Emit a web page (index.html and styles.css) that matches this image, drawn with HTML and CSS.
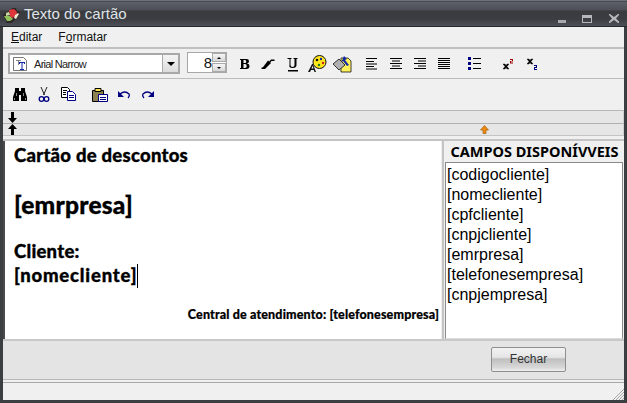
FILE: index.html
```html
<!DOCTYPE html>
<html lang="pt">
<head>
<meta charset="utf-8">
<title>Texto do cartão</title>
<link rel="stylesheet" href="styles.css">
</head>
<body>
<div class="window">
  <header class="titlebar">
    <svg class="app-icon" width="17" height="16" viewBox="0 0 17 16">
      <path d="M0 8l4-3 3 0 2-4 4 0 1 3 3 1-2 5-4 4-3 2H4z" fill="#2e2528"/>
      <path d="M1 9h6l3 3-3 2-3 0z" fill="#8fc05a"/>
      <path d="M6 3l5-1 3 3-1 4-4 2-2-2z" fill="#e0353a"/>
      <path d="M12 8l3-2 1 1-3 5-2-1z" fill="#efe9cf"/>
      <path d="M3 6l3-1 1 3-4 1z" fill="#c9d8a0"/>
    </svg>
    <span class="title-text">Texto do cartão</span>
    <div class="controls">
      <span class="ctl-min"></span>
      <span class="ctl-max"></span>
      <svg class="ctl-close" width="10" height="9" viewBox="0 0 10 9"><path d="M1 0l4 3 4-3h1v1L7 4.500l3 3V9H9L5 6 1 9H0V7.500l3-3L0 1V0z" fill="#b4b7bb"/></svg>
    </div>
  </header>
  <div class="client">
    <nav class="menubar">
      <span class="menu-item"><u>E</u>ditar</span>
      <span class="menu-item">F<u>o</u>rmatar</span>
    </nav>
    <div class="toolbar toolbar-format">
      <div class="combo">
        <svg class="combo-icon" width="14" height="14" viewBox="0 0 14 14"><path d="M.5.500h10l3 3v10H.500z" fill="#fff" stroke="#777"/><path d="M3 3h5v1H3zM5 4h1v4H5z" fill="#888"/><path d="M6 5h6v2h-1V6H9.500v6H11v1H7v-1h1.500V6H7v1H6z" fill="#1028a8"/></svg>
        <span class="combo-text">Arial Narrow</span>
        <span class="combo-btn"><i class="tri-down"></i></span>
      </div>
      <div class="spin">
        <span class="spin-value">8</span>
        <span class="spin-btns">
          <span class="spin-btn"><i class="tri-up-s"></i></span>
          <span class="spin-btn"><i class="tri-down-s"></i></span>
        </span>
      </div>
      <div class="tools">
        <span class="tool"><svg width="24" height="14" viewBox="0 0 24 14"><path d="M7 2h6.500q2.500 0 2.500 2.200 0 1.800-2 2.300 2.500.4 2.500 2.600 0 2.900-3 2.900H7v-1h1V3H7zM10.500 3v3h1.500q1.300 0 1.300-1.500T12 3zM10.500 7v4H12q1.700 0 1.700-2T12 7z" fill="#000"/></svg></span>
        <span class="tool"><svg width="24" height="14" viewBox="0 0 24 14"><path d="M4.500 12h3l7-8h3V2.500h-3.500l-7 8h-2.500z" fill="#000"/><path d="M11 3.500l3 2.500-6 6-3-.5z" fill="#000"/></svg></span>
        <span class="tool"><svg width="24" height="16" viewBox="0 0 24 16"><path d="M7 2h4v1h-1v6q0 2 2 2t2-2V3h-1V2h4v1h-1v6q0 3-4 3T9 9V3H7z" fill="#000" transform="translate(-.5 0)"/><path d="M7 14h10v1.500H7z" fill="#000"/></svg></span>
        <span class="tool"><svg width="24" height="18" viewBox="0 0 24 18"><circle cx="14.500" cy="7" r="6.500" fill="#ffe71a" stroke="#111"/><circle cx="12" cy="5" r="1.300" fill="#111"/><circle cx="16" cy="4" r="1.200" fill="#1028a8"/><circle cx="18" cy="8" r="1.200" fill="#c22"/><circle cx="14" cy="10" r="1.200" fill="#1a7a1a"/><path d="M3 17l4-8h1l3 8h-1.500l-.7-2H6l-1 2zM6.500 13.500h2l-1-2.800z" fill="#111"/></svg></span>
        <span class="tool"><svg width="24" height="18" viewBox="0 0 24 18"><path d="M12 3h7l3 3v11H12z" fill="#fff15a" stroke="#111" stroke-width=".8"/><path d="M15 1l3 3-2 1 4 5-2 1-4-5-2 2z" fill="#1028a8"/><path d="M4 9l6-5 6 6-6 5z" fill="#b0b0b0" stroke="#333"/></svg></span>
        <span class="tool tool-gap"><svg width="24" height="12" viewBox="0 0 24 12"><path d="M6 0h11v1H6zM6 3h8v1H6zM6 5.500h11v1H6zM6 8h8v1H6zM6 10.500h11v1H6z" fill="#000"/></svg></span>
        <span class="tool"><svg width="24" height="12" viewBox="0 0 24 12"><path d="M6 0h12v1H6zM8 2.500h8v1H8zM6 5h12v1H6zM8 7.500h8v1H8zM6 10h12v1H6z" fill="#000"/></svg></span>
        <span class="tool"><svg width="24" height="12" viewBox="0 0 24 12"><path d="M6 0h12v1H6zM10 2.500h8v1h-8zM6 5h12v1H6zM10 7.500h8v1h-8zM6 10h12v1H6z" fill="#000"/></svg></span>
        <span class="tool"><svg width="24" height="12" viewBox="0 0 24 12"><path d="M6 0h12v1H6zM6 2h12v1H6zM6 4h12v1H6zM6 6h12v1H6zM6 8h12v1H6zM6 10h12v1H6z" fill="#000"/></svg></span>
        <span class="tool tool-gap"><svg width="24" height="13" viewBox="0 0 24 13"><path d="M5 0h3v3H5zM5 5h3v3H5zM5 10h3v3H5z" fill="#000080"/><path d="M10 1h8v1h-8zM10 6h8v1h-8zM10 11h8v1h-8z" fill="#000"/></svg></span>
        <span class="tool tool-gap-wide"><svg width="24" height="14" viewBox="0 0 24 14"><path d="M7 7h2l1 1.500L11 7h2l-2 2.500L13 12h-2l-1-1.500L9 12H7l2-2.500z" fill="#000" stroke="#000" stroke-width=".4"/><path d="M14 2h3v2.500h-2v1h2v1h-3V4h2V3h-2z" fill="#a00000"/></svg></span>
        <span class="tool"><svg width="24" height="14" viewBox="0 0 24 14"><path d="M7 2h2l1 1.500L11 2h2l-2 2.500L13 7h-2l-1-1.500L9 7H7l2-2.500z" fill="#000" stroke="#000" stroke-width=".4"/><path d="M14 8h3v3h-2v1h2v1h-3v-3h2V9h-2z" fill="#000080"/></svg></span>
      </div>
    </div>
    <div class="toolbar toolbar-edit">
      <span class="tool"><svg width="24" height="15" viewBox="0 0 24 15"><path d="M7 1h4v3h2V1h4v3l2 6v4h-6V8h-2v6H5v-4l2-6z" fill="#000"/><path d="M8 6h1v3H8zM15 6h1v3h-1zM6 11h1v2H6zM17 11h1v2h-1z" fill="#888"/></svg></span>
      <span class="tool"><svg width="24" height="15" viewBox="0 0 24 15" fill="none"><path d="M9 0l3.500 8M15 0l-3.500 8" stroke="#222"/><circle cx="9.500" cy="12" r="2.300" stroke="#000080" stroke-width="1.300"/><circle cx="14.500" cy="12" r="2.300" stroke="#000080" stroke-width="1.300"/></svg></span>
      <span class="tool"><svg width="24" height="14" viewBox="0 0 24 14"><path d="M5.500.500h6l2 2v3h-2v5h-6z" fill="#fff" stroke="#000"/><path d="M7 3h4v1H7zM7 5h3v1H7zM7 7h3v1H7z" fill="#000"/><path d="M11.500 4.500h5l3 3v6h-8z" fill="#fff" stroke="#000080"/><path d="M13 8h5v1h-5zM13 10h5v1h-5z" fill="#000080"/></svg></span>
      <span class="tool tool-gap"><svg width="24" height="15" viewBox="0 0 24 15"><path d="M4.500 3.500h11v11h-11z" fill="#8c8350" stroke="#000"/><path d="M7 1.500h6v3H7z" fill="#ffe94a" stroke="#000"/><path d="M10.500 7.500h9v7h-9z" fill="#fff" stroke="#000080"/><path d="M12 10h6v1h-6zM12 12h6v1h-6z" fill="#000080"/></svg></span>
      <span class="tool"><svg width="24" height="9" viewBox="0 0 24 9" fill="none"><path d="M8 4q5-4 9 0 1 2-1 4" stroke="#000080" stroke-width="1.300"/><path d="M6 1v6h6z" fill="#000080"/></svg></span>
      <span class="tool"><svg width="24" height="9" viewBox="0 0 24 9" fill="none"><path d="M16 4q-5-4-9 0-1 2 1 4" stroke="#000080" stroke-width="1.300"/><path d="M18 1v6h-6z" fill="#000080"/></svg></span>
    </div>
    <div class="ruler ruler-a">
      <svg class="arrow" width="9" height="11" viewBox="0 0 9 11"><path d="M3 0h3v6h3l-4.500 5L0 6h3z" fill="#000"/></svg>
    </div>
    <div class="ruler ruler-b">
      <svg class="arrow" width="9" height="11" viewBox="0 0 9 11"><path d="M3 11h3V5h3L4.500 0 0 5h3z" fill="#000"/></svg>
      <svg class="marker" width="9" height="9" viewBox="0 0 9 9"><path d="M3 8.500h3V5h2.500L4.500.500.500 5H3z" fill="#f08a10" stroke="#a06010" stroke-width=".7"/></svg>
    </div>
    <main class="main">
      <section class="editor">
        <p class="line l1">Cartão de descontos</p>
        <p class="line l2">[emrpresa]</p>
        <p class="line l3">Cliente:</p>
        <p class="line l4">[nomecliente]<span class="caret"></span></p>
        <p class="line l5">Central de atendimento: [telefonesempresa]</p>
      </section>
      <aside class="fields">
        <h2 class="fields-head">CAMPOS DISPONÍVVEIS</h2>
        <ul class="fields-list">
          <li>[codigocliente]</li>
          <li>[nomecliente]</li>
          <li>[cpfcliente]</li>
          <li>[cnpjcliente]</li>
          <li>[emrpresa]</li>
          <li>[telefonesempresa]</li>
          <li>[cnpjempresa]</li>
        </ul>
      </aside>
    </main>
    <footer class="footer"><button class="close-btn" type="button">Fechar</button></footer>
    <div class="status">
      <svg class="grip" width="12" height="12" viewBox="0 0 12 12"><path d="M12 1L1 12M12 4L4 12M12 7L7 12M12 10l-2 2" stroke="#a8a8a8"/></svg>
    </div>
  </div>
</div>
</body>
</html>
```
FILE: styles.css
```css
* { box-sizing: border-box; }
html, body { margin: 0; padding: 0; }
body { width: 627px; height: 403px; overflow: hidden; background: #3a3c40; font-family: "Liberation Sans", Arial, sans-serif; }
.window { width: 627px; height: 403px; display: flex; flex-direction: column; background: #3c3e42; border-top: 1px solid #6d7076; padding: 0 3px 3px; }
.titlebar { height: 26px; flex: none; margin: 0 -3px; padding: 0 8px 0 3px; display: flex; align-items: center; border-bottom: 1px solid #26272a; background: linear-gradient(#33353a 0, #5c6068 1px, #4c4f55 9px, #3a3b3f 10px, #3c3d42 18px, #4d5057 25px); }
.app-icon { flex: none; margin-top: 2px; }
.title-text { margin-left: 4px; font: 15px "Liberation Sans", sans-serif; color: #dfe3e8; line-height: 26px; }
.controls { margin-left: auto; display: flex; align-items: flex-end; height: 18px; }
.ctl-min { width: 8px; height: 3px; background: #a6a9ad; margin-bottom: 0; }
.ctl-max { width: 10px; height: 8px; border: 1px solid #b4b7bb; border-top-width: 3px; margin-left: 16px; }
.ctl-close { margin-left: 17px; }
.client { flex: 1; display: flex; flex-direction: column; background: #f0f0f0; min-height: 0; }
.menubar { height: 20px; flex: none; display: flex; align-items: center; padding: 0 0 0 8px; gap: 16px; font: 12px "Liberation Sans", sans-serif; color: #111; }
.menu-item { line-height: 20px; }
.toolbar { display: flex; align-items: center; flex: none; }
.toolbar-format { height: 32px; border-top: 2px solid #c0c0c0; border-bottom: 1px solid #bdbdbd; padding-left: 5px; }
.toolbar-edit { height: 31px; padding-left: 5px; padding-bottom: 1px; }
.combo { width: 172px; height: 21px; display: flex; align-items: center; border: 2px solid #a8a8a8; background: #fff; padding-left: 3px; }
.combo-icon { flex: none; }
.combo-text { margin-left: 7px; font: 11px "Liberation Sans", sans-serif; letter-spacing: -.7px; color: #222; flex: 1; }
.combo-btn { width: 16px; height: 17px; display: flex; align-items: center; justify-content: center; background: linear-gradient(#f4f4f4, #dcdcdc); border-left: 1px solid #aaa; }
.tri-down { border: 4px solid transparent; border-top: 4px solid #000; border-bottom: 0; }
.spin { margin-left: 7px; width: 40px; height: 21px; display: flex; align-items: center; border: 1px solid #a8a8a8; background: #fff; margin-top: -2px; }
.spin-value { width: 24px; text-align: right; font: 15px "Liberation Sans", sans-serif; color: #111; }
.spin-btns { display: flex; flex-direction: column; gap: 1px; width: 14px; }
.spin-btn { height: 9px; display: flex; align-items: center; justify-content: center; background: linear-gradient(#f6f6f6, #d6d6d6); border: 1px solid #aaa; }
.tri-up-s { border: 2px solid transparent; border-bottom: 2px solid #000; border-top: 0; }
.tri-down-s { border: 2px solid transparent; border-top: 2px solid #000; border-bottom: 0; }
.tools { display: flex; align-items: center; margin-left: 6px; }
.tool { width: 24px; flex: none; display: flex; align-items: center; justify-content: center; }
.tool-gap { margin-left: 7px; }
.tool-gap-wide { margin-left: 9px; }
.toolbar-edit .tool-gap { margin-left: 8px; }
.ruler { height: 13px; flex: none; background: #e6e6e6; border-top: 1px solid #b8b8b8; display: flex; align-items: center; padding-left: 5px; border-right: 1px solid #cfcfcf; }
.ruler-b { border-top: 1px solid #b0b0b0; border-bottom: 1px solid #c4c4c4; }
.marker { margin-left: 463px; }
.main { height: 200px; flex: none; display: flex; margin-top: 3px; border-top: 2px solid #c4c4c4; }
.editor { width: 438px; flex: none; background: #fff; border-left: 2px solid #4a4a4a; padding: 3px 2px 0 9px; color: #000; font-family: Lato, sans-serif; font-weight: 900; -webkit-text-stroke: .35px #000; letter-spacing: .25px; }
.line { margin: 0; white-space: nowrap; }
.l1 { font-size: 18.500px; line-height: 22px; }
.l2 { font-size: 24.500px; line-height: 30px; margin-top: 24px; }
.l3 { font-size: 18.500px; line-height: 24px; margin-top: 19px; }
.l4 { font-size: 18.500px; line-height: 24px; letter-spacing: .8px; }
.l5 { font-size: 12.500px; line-height: 16px; margin-top: 19px; text-align: right; -webkit-text-stroke: .2px #000; letter-spacing: .15px; }
.caret { display: inline-block; width: 1px; height: 24px; background: #000; vertical-align: -6px; margin-left: 0; }
.fields { flex: 1; display: flex; flex-direction: column; border-left: 2px solid #c4c4c4; padding-left: 1px; margin-left: 1px; min-width: 0; }
.fields-head { margin: 0; height: 21px; flex: none; font: 700 14.500px/21px "Noto Sans", sans-serif; color: #000; text-align: center; white-space: nowrap; }
.fields-list { flex: 1; margin: 0 1px 0 0; padding: 2px 0 0 1px; list-style: none; background: #fff; border: 1px solid #8a8a8a; border-bottom-color: #dcdcdc; font: 16px/20px "Liberation Sans", sans-serif; color: #000; }
.footer { height: 41px; flex: none; background: #e4e4e4; border-top: 2px solid #c8c8c8; border-bottom: 1px solid #b8b8b8; display: flex; align-items: center; justify-content: flex-end; padding: 0 58px 2px 0; }
.close-btn { width: 75px; height: 25px; border: 1px solid #8f8f8f; border-radius: 2px; background: linear-gradient(#f2f2f2 0, #e6e6e6 40%, #bfbfbf 48%, #d8d8d8 85%, #f0f0f0 100%); font: 12px "Liberation Sans", sans-serif; color: #333; padding: 0; }
.status { flex: 1; border-top: 1px solid #a8a8a8; margin-top: 2px; background: #f0f0f0; display: flex; justify-content: flex-end; align-items: flex-end; }
.grip { flex: none; }
```
